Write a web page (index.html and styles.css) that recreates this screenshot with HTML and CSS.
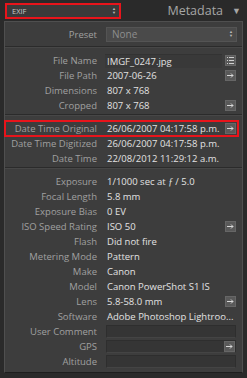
FILE: index.html
```html
<!DOCTYPE html>
<html lang="en">
<head>
  <meta charset="UTF-8" />
  <meta name="viewport" content="width=device-width, initial-scale=1.0"/>
  <title>Metadata</title>
  <link rel="stylesheet" href="styles.css">
</head>
<body>
  <div class="header">
    <div class="mode-select">
      <span>EXIF</span>
      <span class="updown">&#9650;<br>&#9660;</span>
    </div>
    <div class="title">Metadata</div>
    <div class="collapse">&#9660;</div>
  </div>

  <div class="panel">
    <div class="preset">
      <span class="label">Preset</span>
      <div class="preset-select">
        <span>None</span>
        <span class="updown">&#9650;<br>&#9660;</span>
      </div>
    </div>

    <div class="group">
      <div class="row">
        <span class="label">File Name</span>
        <span class="value filename">IMGF_0247.jpg</span>
        <span class="btn">
          <svg width="9" height="9" viewBox="0 0 9 9"><g fill="#cfcfcf"><rect x="1" y="1" width="1" height="1"/><rect x="3" y="1" width="5" height="1"/><rect x="1" y="4" width="1" height="1"/><rect x="3" y="4" width="5" height="1"/><rect x="1" y="7" width="1" height="1"/><rect x="3" y="7" width="5" height="1"/></g></svg>
        </span>
      </div>
      <div class="row">
        <span class="label">File Path</span>
        <span class="value">2007-06-26</span>
        <span class="btn"><svg width="9" height="9" viewBox="0 0 9 9"><path d="M1 4.5h6M5 2.5l2 2-2 2" stroke="#d8d8d8" stroke-width="1" fill="none"/></svg></span>
      </div>
      <div class="row">
        <span class="label">Dimensions</span>
        <span class="value">807 x 768</span>
      </div>
      <div class="row">
        <span class="label">Cropped</span>
        <span class="value">807 x 768</span>
        <span class="btn"><svg width="9" height="9" viewBox="0 0 9 9"><path d="M1 4.5h6M5 2.5l2 2-2 2" stroke="#d8d8d8" stroke-width="1" fill="none"/></svg></span>
      </div>
    </div>

    <div class="group">
      <div class="row marked">
        <span class="label">Date Time Original</span>
        <span class="value">26/06/2007 04:17:58 p.m.</span>
        <span class="btn"><svg width="9" height="9" viewBox="0 0 9 9"><path d="M1 4.5h6M5 2.5l2 2-2 2" stroke="#d8d8d8" stroke-width="1" fill="none"/></svg></span>
      </div>
      <div class="row">
        <span class="label">Date Time Digitized</span>
        <span class="value">26/06/2007 04:17:58 p.m.</span>
      </div>
      <div class="row">
        <span class="label">Date Time</span>
        <span class="value">22/08/2012 11:29:12 a.m.</span>
      </div>
    </div>

    <div class="group last">
      <div class="row">
        <span class="label">Exposure</span>
        <span class="value">1/1000 sec at <i>ƒ</i> / 5.0</span>
      </div>
      <div class="row">
        <span class="label">Focal Length</span>
        <span class="value">5.8 mm</span>
      </div>
      <div class="row">
        <span class="label">Exposure Bias</span>
        <span class="value">0 EV</span>
      </div>
      <div class="row">
        <span class="label">ISO Speed Rating</span>
        <span class="value">ISO 50</span>
        <span class="btn"><svg width="9" height="9" viewBox="0 0 9 9"><path d="M1 4.5h6M5 2.5l2 2-2 2" stroke="#d8d8d8" stroke-width="1" fill="none"/></svg></span>
      </div>
      <div class="row">
        <span class="label">Flash</span>
        <span class="value">Did not fire</span>
      </div>
      <div class="row">
        <span class="label">Metering Mode</span>
        <span class="value">Pattern</span>
      </div>
      <div class="row">
        <span class="label">Make</span>
        <span class="value">Canon</span>
      </div>
      <div class="row">
        <span class="label">Model</span>
        <span class="value">Canon PowerShot S1 IS</span>
      </div>
      <div class="row">
        <span class="label">Lens</span>
        <span class="value">5.8-58.0 mm</span>
        <span class="btn"><svg width="9" height="9" viewBox="0 0 9 9"><path d="M1 4.5h6M5 2.5l2 2-2 2" stroke="#d8d8d8" stroke-width="1" fill="none"/></svg></span>
      </div>
      <div class="row">
        <span class="label">Software</span>
        <span class="value">Adobe Photoshop Lightroo...</span>
      </div>
      <div class="row">
        <span class="label">User Comment</span>
        <span class="field"></span>
      </div>
      <div class="row">
        <span class="label">GPS</span>
        <span class="field">
          <span class="btn"><svg width="9" height="9" viewBox="0 0 9 9"><path d="M1 4.5h6M5 2.5l2 2-2 2" stroke="#d8d8d8" stroke-width="1" fill="none"/></svg></span>
        </span>
      </div>
      <div class="row">
        <span class="label">Altitude</span>
        <span class="field"></span>
      </div>
    </div>
  </div>
</body>
</html>
```

FILE: styles.css
```css
body {
  margin: 0;
  padding: 0;
  width: 247px;
  height: 378px;
  background: #2a2a2a;
  font-family: "Open Sans", "Liberation Sans", sans-serif;
  font-size: 9.5px;
  overflow: hidden;
}
.header {
  display: flex;
  align-items: center;
  height: 21px;
  padding: 0 6px 0 5px;
}
.mode-select {
  display: flex;
  align-items: center;
  justify-content: space-between;
  width: 104px;
  height: 12px;
  padding: 0 3px 0 5px;
  background: #3a3a3a;
  border: 2px solid #e8141b;
  color: #c8c8c8;
  font-size: 7.5px;
}
.updown {
  font-size: 4px;
  line-height: 4px;
  color: #bdbdbd;
  text-align: center;
}
.title {
  margin-left: auto;
  color: #a6a6a6;
  font-size: 12.5px;
  margin-right: 9px;
}
.collapse {
  color: #a6a6a6;
  font-size: 9px;
}
.panel {
  margin: 0 4px;
  height: 350px;
  background: #3d3d3d;
  border: 1px solid #4f4f4f;
  border-bottom: 1px solid #1e1e1e;
}
.preset {
  display: flex;
  align-items: center;
  height: 24px;
  padding-right: 5px;
  border-bottom: 1px solid #2b2b2b;
}
.preset-select {
  flex: 1;
  display: flex;
  justify-content: space-between;
  align-items: center;
  height: 13px;
  margin-left: 9px;
  padding: 0 3px 0 5px;
  background: #4a4a4a;
  border: 1px solid #545454;
  color: #8e8e8e;
  font-size: 10px;
}
.label {
  width: 92px;
  flex: none;
  text-align: right;
  color: #a0a0a0;
  white-space: nowrap;
}
.group {
  padding: 5px 0 1px;
  border-top: 1px solid #474747;
  border-bottom: 1px solid #2b2b2b;
}
.group.last {
  border-bottom: none;
}
.row {
  display: flex;
  align-items: center;
  height: 15px;
  padding-right: 6px;
}
.value {
  flex: 1;
  margin-left: 10px;
  color: #e2e2e2;
  white-space: nowrap;
}
.value i {
  font-family: "Liberation Serif", serif;
}
.filename {
  margin-left: 8px;
  padding-left: 2px;
  margin-right: 3px;
  background: #393939;
  border-top: 1px solid #333;
  line-height: 13px;
}
.btn {
  width: 11px;
  height: 11px;
  display: flex;
  align-items: center;
  justify-content: center;
  background: #595959;
  border: 1px solid #666;
  box-sizing: border-box;
}
.field {
  flex: 1;
  display: flex;
  justify-content: flex-end;
  align-items: center;
  height: 13px;
  margin-left: 9px;
  background: #353535;
  border: 1px solid #2e2e2e;
  border-bottom-color: #444;
  box-sizing: border-box;
}
.marked {
  margin-right: 4px;
  padding-right: 2px;
  outline: 2px solid #e8141b;
  outline-offset: -1px;
}
```
